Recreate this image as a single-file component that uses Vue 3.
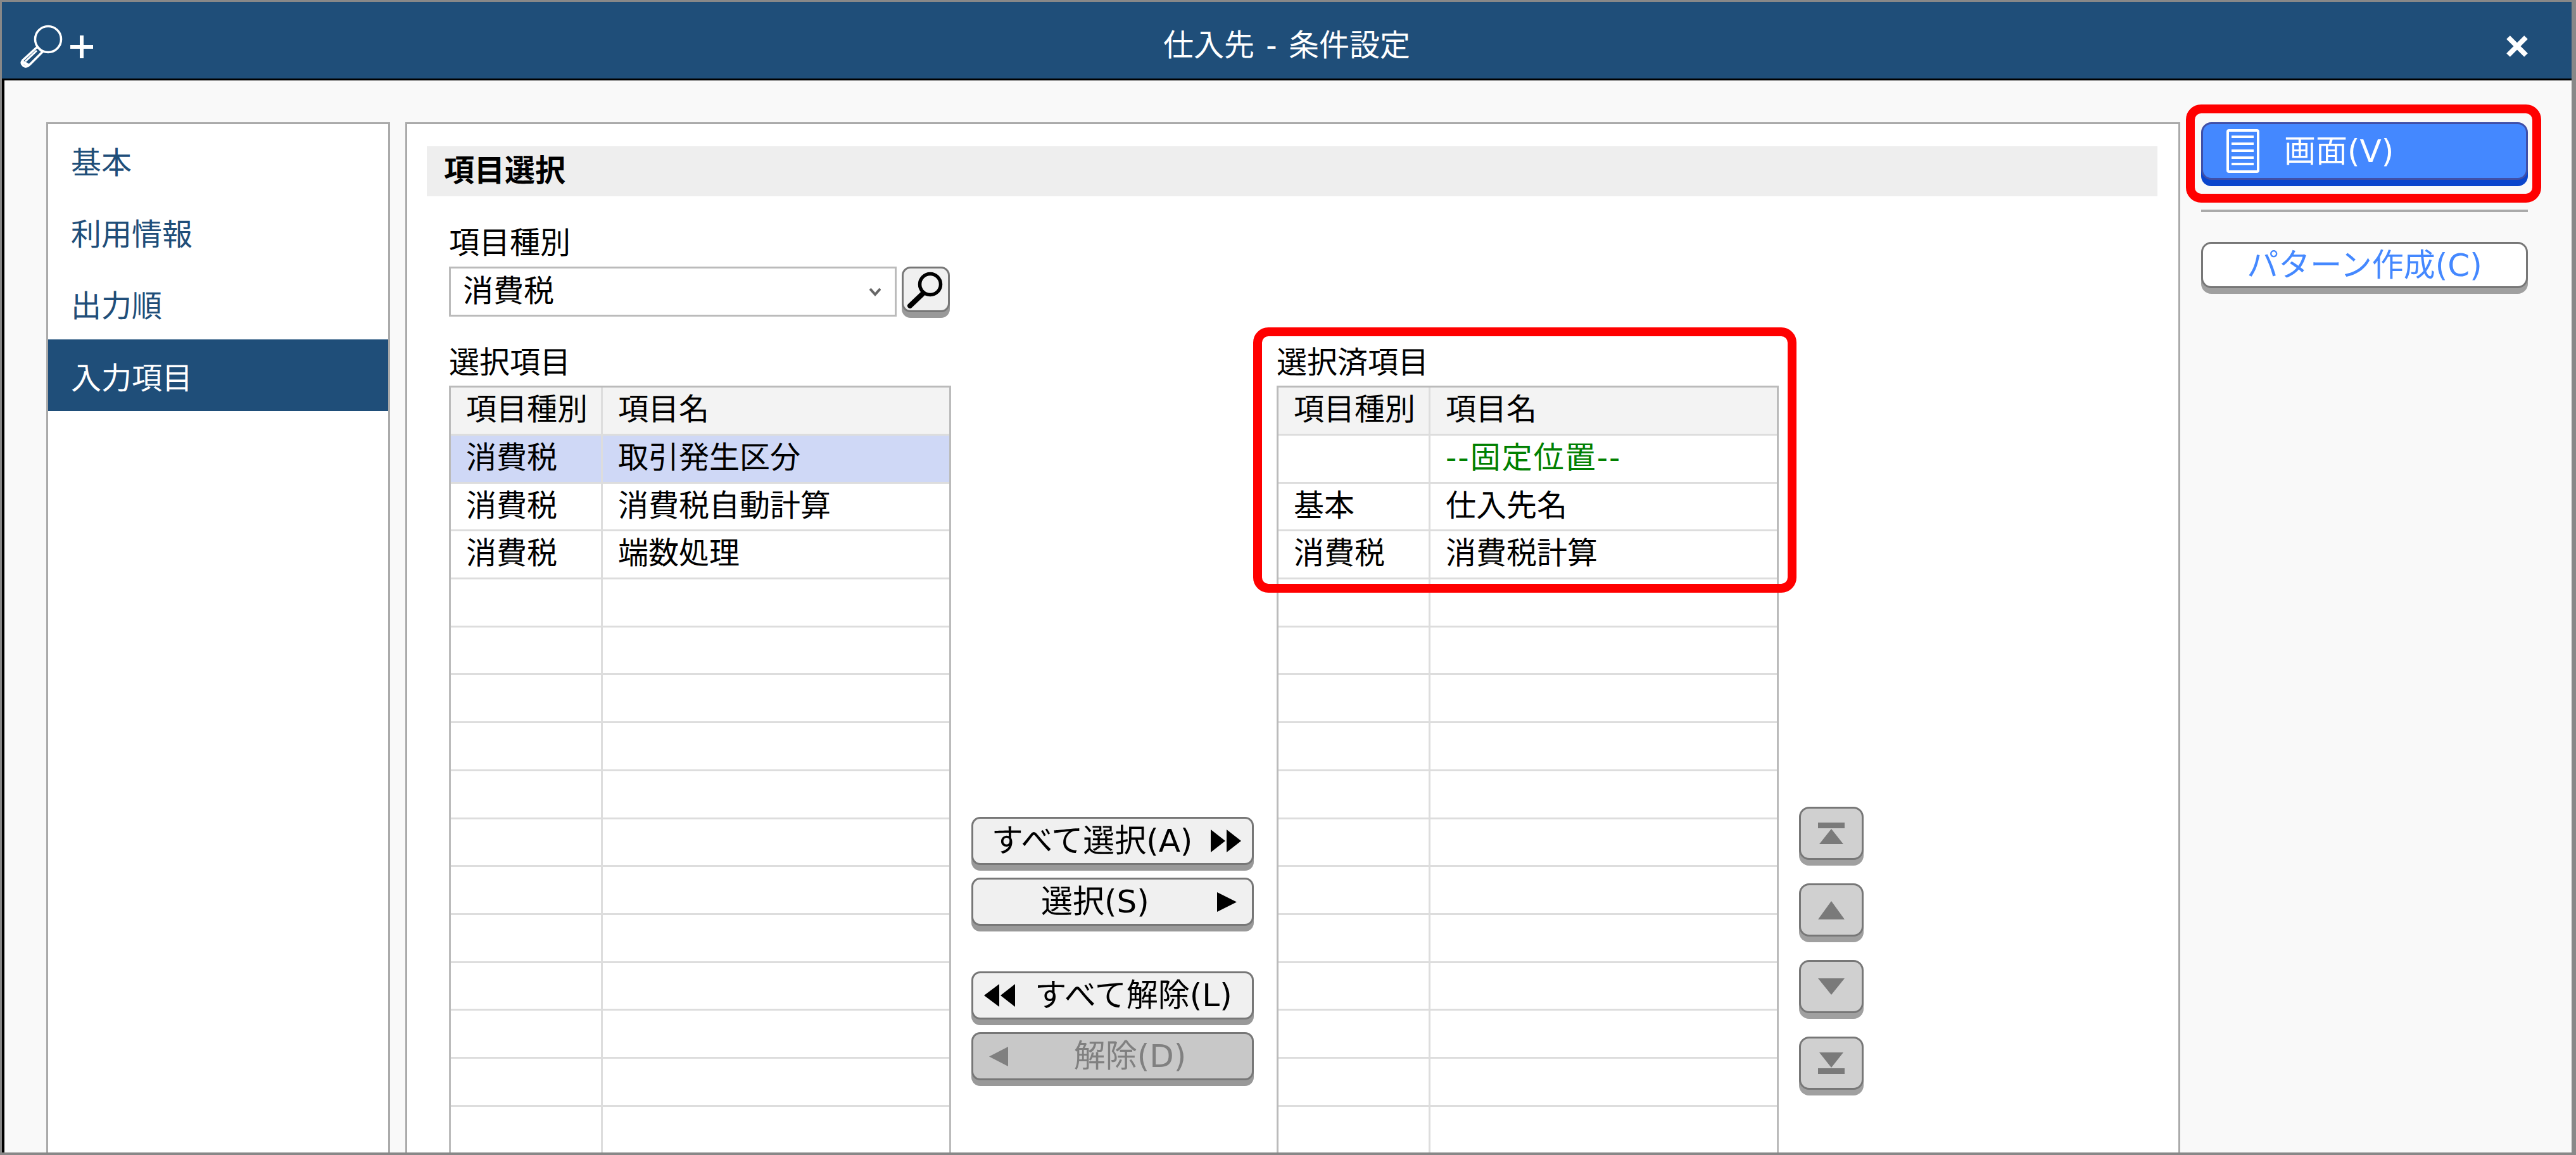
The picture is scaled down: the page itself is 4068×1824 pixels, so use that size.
<template>
  <div class="window">
    <header class="titlebar">
      <svg class="title-icon" width="120" height="70" viewBox="30 38 120 70">
        <circle cx="76" cy="62" r="20.5" fill="none" stroke="#fff" stroke-width="3.5" />
        <path
          d="M59 74 L36 95 Q32 100 37 104 Q42 107 47 102 L67 82 Z"
          fill="none"
          stroke="#fff"
          stroke-width="3.5"
          stroke-linejoin="round"
        />
        <path d="M40 97 L58 80" stroke="#fff" stroke-width="3" />
        <path d="M36 98 L46 104" stroke="#fff" stroke-width="5" />
        <path d="M111 74 H147 M129 56 V92" stroke="#fff" stroke-width="6" />
      </svg>
      <div class="title-text">仕入先 - 条件設定</div>
      <svg class="close-icon" width="36" height="34" viewBox="0 0 36 34">
        <path d="M4 3 L32 31 M32 3 L4 31" stroke="#fff" stroke-width="8" />
      </svg>
    </header>

    <div class="body">
      <nav class="sidebar">
        <div
          v-for="item in menu"
          :key="item"
          class="menu-item"
          :class="{ active: item === '入力項目' }"
        >
          {{ item }}
        </div>
      </nav>

      <main class="panel">
        <div class="section-head">項目選択</div>

        <div class="kind-block">
          <div class="field-label">項目種別</div>
          <div class="kind-row">
            <div class="select-box">
              <span class="select-text">消費税</span>
              <svg width="18" height="14" viewBox="0 0 18 14">
                <path d="M1 2 L9 11 L17 2" fill="none" stroke="#666" stroke-width="4" />
              </svg>
            </div>
            <button class="search-btn">
              <svg width="62" height="64" viewBox="0 0 62 64">
                <circle cx="38" cy="24" r="16.5" fill="none" stroke="#000" stroke-width="5.5" />
                <path d="M26 39 L6 58" stroke="#000" stroke-width="8" stroke-linecap="round" />
              </svg>
            </button>
          </div>
        </div>

        <div class="pickers">
          <section class="picker">
            <div class="field-label table-label">選択項目</div>
            <div class="list">
              <div class="row head">
                <div class="cell">項目種別</div>
                <div class="cell">項目名</div>
              </div>
              <div
                v-for="(row, i) in available"
                :key="i"
                class="row"
                :class="{ picked: row.picked }"
              >
                <div class="cell">{{ row.kind }}</div>
                <div class="cell">{{ row.name }}</div>
              </div>
            </div>
          </section>

          <div class="transfer">
            <button class="btn wide">
              <span class="btn-label">すべて選択(A)</span>
              <svg class="arrow-right-2" width="48" height="36" viewBox="0 0 48 36">
                <path d="M0 0 L23 18 L0 36 Z M25 0 L48 18 L25 36 Z" fill="#000" />
              </svg>
            </button>
            <button class="btn wide">
              <span class="btn-label">選択(S)</span>
              <svg class="arrow-right-1" width="31" height="31" viewBox="0 0 31 31">
                <path d="M0 0 L31 15.5 L0 31 Z" fill="#000" />
              </svg>
            </button>
            <button class="btn wide release">
              <svg class="arrow-left-2" width="49" height="36" viewBox="0 0 49 36">
                <path d="M24 0 L0 18 L24 36 Z M49 0 L26 18 L49 36 Z" fill="#000" />
              </svg>
              <span class="btn-label">すべて解除(L)</span>
            </button>
            <button class="btn wide off">
              <svg class="arrow-left-1" width="30" height="31" viewBox="0 0 30 31">
                <path d="M30 0 L0 15.5 L30 31 Z" fill="#808080" />
              </svg>
              <span class="btn-label">解除(D)</span>
            </button>
          </div>

          <section class="picker">
            <div class="field-label table-label">選択済項目</div>
            <div class="list">
              <div class="row head">
                <div class="cell">項目種別</div>
                <div class="cell">項目名</div>
              </div>
              <div v-for="(row, i) in chosen" :key="i" class="row">
                <div class="cell">{{ row.kind }}</div>
                <div class="cell" :class="{ fixed: row.fixed }">{{ row.name }}</div>
              </div>
            </div>
            <div class="mark mark-table"></div>
          </section>

          <div class="movers">
            <button class="move-btn">
              <svg width="42" height="34" viewBox="0 0 42 34">
                <path d="M0 0 H42 V9 H0 Z M21 10 L40 34 H2 Z" fill="#7a7a7a" />
              </svg>
            </button>
            <button class="move-btn">
              <svg width="42" height="29" viewBox="0 0 42 29">
                <path d="M21 0 L42 29 H0 Z" fill="#7a7a7a" />
              </svg>
            </button>
            <button class="move-btn">
              <svg width="42" height="26" viewBox="0 0 42 26">
                <path d="M0 0 H42 L21 26 Z" fill="#7a7a7a" />
              </svg>
            </button>
            <button class="move-btn">
              <svg width="42" height="34" viewBox="0 0 42 34">
                <path d="M2 0 H40 L21 24 Z M0 25 H42 V34 H0 Z" fill="#7a7a7a" />
              </svg>
            </button>
          </div>
        </div>
      </main>

      <aside class="actions">
        <button class="view-btn">
          <svg width="52" height="69" viewBox="0 0 52 69">
            <rect x="2" y="2" width="48" height="65" rx="2" fill="none" stroke="#fff" stroke-width="4" />
            <path
              d="M8 12 H43 M8 23 H43 M8 34 H43 M8 45 H43 M8 55 H43"
              stroke="#fff"
              stroke-width="4"
            />
          </svg>
          <span>画面(V)</span>
        </button>
        <div class="mark mark-view"></div>
        <div class="divider"></div>
        <button class="pattern-btn">パターン作成(C)</button>
      </aside>
    </div>
  </div>
</template>

<script setup>
const menu = ['基本', '利用情報', '出力順', '入力項目']

const ROW_COUNT = 16

function fillRows(rows) {
  const blanks = Array.from({ length: ROW_COUNT - rows.length }, () => ({ kind: '', name: '' }))
  return [...rows, ...blanks]
}

const available = fillRows([
  { kind: '消費税', name: '取引発生区分', picked: true },
  { kind: '消費税', name: '消費税自動計算' },
  { kind: '消費税', name: '端数処理' },
])

const chosen = fillRows([
  { kind: '', name: '--固定位置--', fixed: true },
  { kind: '基本', name: '仕入先名' },
  { kind: '消費税', name: '消費税計算' },
])
</script>

<style>
html,
body {
  margin: 0;
  background: #fff;
}
</style>

<style scoped>
.window {
  width: 4068px;
  height: 1824px;
  box-sizing: border-box;
  border: solid #888;
  border-width: 3px 7px 4px 3px;
  background: #f9f9f9;
  display: flex;
  flex-direction: column;
  overflow: hidden;
  font-family: 'DejaVu Sans', 'Noto Sans CJK JP', sans-serif;
  font-size: 48px;
  line-height: 56px;
  color: #000;
}

button {
  font: inherit;
  font-size: 50px;
  padding: 0;
  cursor: pointer;
}

.titlebar {
  flex: none;
  height: 124px;
  box-sizing: border-box;
  padding: 18px 27px 0;
  background: #1f4e79;
  border-bottom: 3px solid #000;
  display: grid;
  grid-template-columns: 1fr auto 1fr;
  align-items: center;
}
.title-text {
  color: #fff;
  word-spacing: 3px;
  padding-bottom: 3px;
}
.close-icon {
  justify-self: end;
  margin-right: 41px;
}

.body {
  flex: 1;
  min-height: 0;
  display: flex;
  padding: 66px 0 0 66px;
  border-left: 4px solid #000;
}

.sidebar {
  flex: none;
  width: 543px;
  box-sizing: border-box;
  background: #fff;
  border: 3px solid #aaa;
  border-bottom: none;
}
.menu-item {
  height: 113.3px;
  box-sizing: border-box;
  padding-left: 36px;
  padding-top: 8px;
  display: flex;
  align-items: center;
  color: #1f4e79;
}
.menu-item.active {
  background: #1f4e79;
  color: #fff;
}

.panel {
  flex: none;
  width: 2803px;
  margin-left: 24px;
  box-sizing: border-box;
  padding: 35px 33px 0 31px;
  background: #fff;
  border: 3px solid #aaa;
  border-bottom: none;
  overflow: hidden;
}
.section-head {
  height: 79px;
  box-sizing: border-box;
  padding: 0 0 4px 27px;
  display: flex;
  align-items: center;
  background: #eee;
  font-weight: 700;
}

.kind-block {
  margin: 45px 0 0 35px;
}
.field-label {
  height: 56px;
  margin-bottom: 10px;
}
.kind-row {
  display: flex;
  gap: 8px;
}
.select-box {
  width: 707px;
  height: 79px;
  box-sizing: border-box;
  padding: 0 22px 0 19px;
  border: 3px solid #bbb;
  display: flex;
  align-items: center;
  justify-content: space-between;
}
.select-text {
  padding-bottom: 4px;
}
.search-btn {
  width: 76px;
  height: 72px;
  box-sizing: border-box;
  border: 3px solid #777;
  border-radius: 14px;
  background: #f0f0f0;
  box-shadow: 0 9px 0 #999;
  display: flex;
  align-items: center;
  justify-content: center;
}

.pickers {
  margin: 44px 0 0 35px;
  display: flex;
  align-items: flex-start;
}
.picker {
  position: relative;
  flex: none;
  width: 793px;
}
.table-label {
  margin-bottom: 9px;
}
.list {
  border: 3px solid #bbb;
  border-bottom: none;
}
.row {
  display: grid;
  grid-template-columns: 240px 1fr;
  height: 75.7px;
  box-sizing: border-box;
  border-bottom: 3px solid #ddd;
  align-items: stretch;
}
.row.head {
  height: 76px;
  background: #f3f3f3;
}
.row.picked {
  background: #cfd8f6;
}
.cell {
  padding: 0 0 5px 24px;
  display: flex;
  align-items: center;
}
.cell:first-child {
  border-right: 3px solid #ddd;
}
.cell:last-child {
  padding-left: 24px;
}
.cell.fixed {
  color: #008000;
  letter-spacing: 2px;
}

.transfer {
  flex: none;
  width: 446px;
  margin: 746px 36px 0 32px;
  display: flex;
  flex-direction: column;
}
.btn {
  height: 76px;
  margin-bottom: 20px;
  box-sizing: border-box;
  border: 3px solid #777;
  border-radius: 14px;
  background: #f0f0f0;
  box-shadow: 0 9px 0 #999;
  display: flex;
  align-items: center;
  color: #000;
}
.btn.release {
  margin-top: 52px;
}
.btn.off {
  background: #c8c8c8;
  color: #808080;
}
.btn-label {
  flex: 1;
  text-align: center;
}
.arrow-right-2 {
  margin-right: 17px;
}
.arrow-right-1 {
  margin-right: 24px;
}
.arrow-left-2 {
  margin-left: 17px;
}
.arrow-left-1 {
  margin-left: 25px;
}

.movers {
  flex: none;
  margin: 730px 0 0 32px;
  display: flex;
  flex-direction: column;
  gap: 37px;
}
.move-btn {
  width: 102px;
  height: 84px;
  box-sizing: border-box;
  border: 3px solid #777;
  border-radius: 16px;
  background: #d0d0d0;
  box-shadow: 0 9px 0 #a0a0a0;
  display: flex;
  align-items: center;
  justify-content: center;
}

.actions {
  position: relative;
  flex: none;
  width: 516px;
  margin-left: 33px;
}
.view-btn {
  width: 100%;
  height: 91px;
  box-sizing: border-box;
  padding-left: 37px;
  border: 3px solid #3f4fa8;
  border-radius: 16px;
  background: #4488ff;
  box-shadow: 0 10px 0 #0a45cc;
  color: #fff;
  display: flex;
  align-items: center;
  gap: 39px;
}
.divider {
  height: 4px;
  margin-top: 47px;
  background: #aaa;
}
.pattern-btn {
  display: block;
  width: 100%;
  height: 73px;
  margin-top: 47px;
  box-sizing: border-box;
  border: 3px solid #777;
  border-radius: 16px;
  background: #fff;
  box-shadow: 0 9px 0 #a0a0a0;
  color: #4488ff;
}

/* red highlight boxes sit over the screen capture */
.mark {
  position: absolute;
  box-sizing: border-box;
  border: 14px solid #f00;
  border-radius: 24px;
  pointer-events: none;
}
.mark-table {
  left: -37px;
  top: -27px;
  width: 858px;
  height: 419px;
}
.mark-view {
  left: -24px;
  top: -28px;
  width: 561px;
  height: 155px;
}
</style>
